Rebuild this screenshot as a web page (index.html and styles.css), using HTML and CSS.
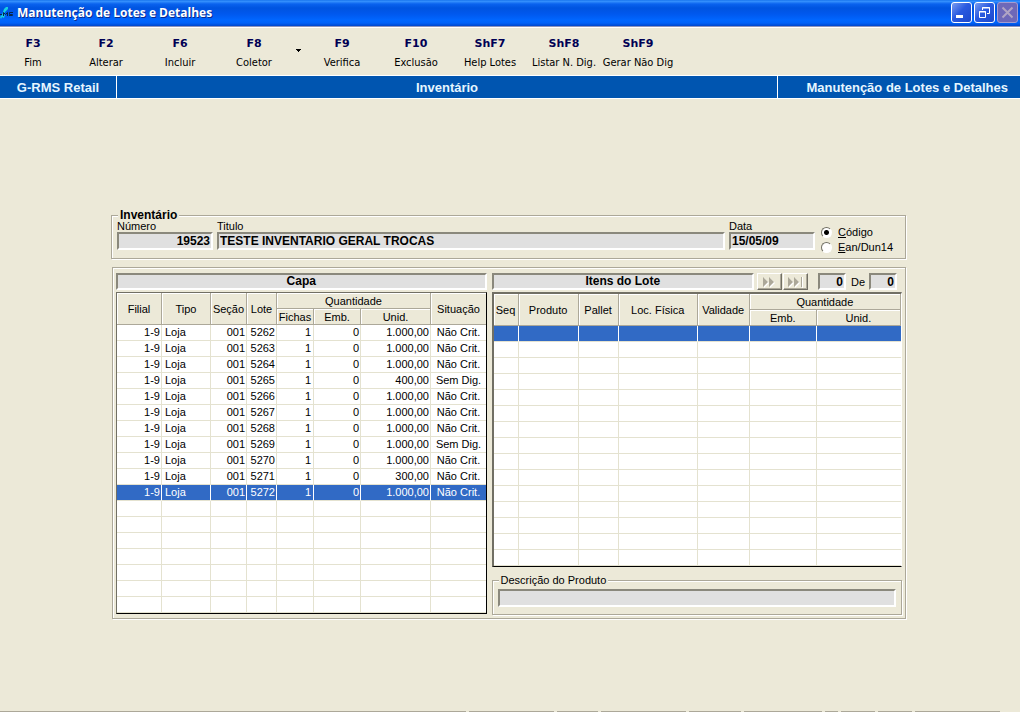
FILE: index.html
```html
<!DOCTYPE html>
<html lang="pt-BR">
<head>
<meta charset="utf-8">
<title>Manutenção de Lotes e Detalhes</title>
<link rel="stylesheet" href="styles.css">
</head>
<body>
<header class="titlebar">
  <svg class="logo" width="14" height="18" viewBox="0 0 14 18" aria-hidden="true">
    <path d="M3 8 L4 5 L6 3 L8 3 L8 5 L5 8 L4 10 L5 11 L4 14 L2 13 L1 15 L0 13 L2 11 Z" fill="#18d0e0"/>
    <path d="M0 10.500H2M3.500 12V8.500L5.500 10.500L7.500 8.500V12M13 8.500H9.500V10.500H12.500V11.500H9" fill="none" stroke="#06284c" stroke-width="1"/>
  </svg>
  <h1 class="title">Manutenção de Lotes e Detalhes</h1>
  <button class="win" aria-label="Minimizar"><svg width="19" height="19" viewBox="0 0 19 19"><path d="M4 12h7v3H4z" fill="#fff"/></svg></button>
  <button class="win" aria-label="Restaurar"><svg width="19" height="19" viewBox="0 0 19 19" fill="none" stroke="#fff"><path d="M7.5 7V4.5h7v6H12M7 5h8M4.5 8.5h6v6h-6zM4 9h7"/></svg></button>
  <button class="win win-off" aria-label="Fechar" disabled><svg width="19" height="19" viewBox="0 0 19 19"><path d="M4.500 4.500l10 10M14.500 4.500l-10 10" stroke="#b0a4c4" stroke-width="2"/></svg></button>
</header>

<nav class="toolbar">
  <button class="tool first"><b>F3</b><span>Fim</span></button>
  <button class="tool"><b>F2</b><span>Alterar</span></button>
  <button class="tool"><b>F6</b><span>Incluir</span></button>
  <button class="tool"><b>F8</b><span>Coletor</span></button>
  <button class="drop" aria-label="Opções do coletor"><svg width="5" height="3" viewBox="0 0 5 3"><path d="M0 0h5v1H4v1H3v1H2V2H1V1H0z"/></svg></button>
  <button class="tool"><b>F9</b><span>Verifica</span></button>
  <button class="tool"><b>F10</b><span>Exclusão</span></button>
  <button class="tool"><b>ShF7</b><span>Help Lotes</span></button>
  <button class="tool"><b>ShF8</b><span>Listar N. Dig.</span></button>
  <button class="tool"><b>ShF9</b><span>Gerar Não Dig</span></button>
</nav>

<div class="context">
  <div class="ctx ctx-app">G-RMS Retail</div>
  <div class="ctx ctx-module">Inventário</div>
  <div class="ctx ctx-screen">Manutenção de Lotes e Detalhes</div>
</div>

<main class="work">
  <fieldset class="group inventory">
    <legend class="bold">Inventário</legend>
    <div class="fields">
      <div class="field f-number"><label for="num">Número</label><input id="num" class="box right" value="19523" readonly></div>
      <div class="field f-title"><label for="tit">Titulo</label><input id="tit" class="box" value="TESTE INVENTARIO GERAL TROCAS" readonly></div>
      <div class="field f-date"><label for="dat">Data</label><input id="dat" class="box" value="15/05/09" readonly></div>
      <div class="radios">
        <label><input type="radio" name="modo" checked><span><u>C</u>ódigo</span></label>
        <label><input type="radio" name="modo"><span><u>E</u>an/Dun14</span></label>
      </div>
    </div>
  </fieldset>

  <section class="group panel">
    <div class="side">
      <h2 class="box caption">Capa</h2>
      <table class="grid" id="capa">
        <colgroup><col class="c-filial"><col class="c-tipo"><col class="c-secao"><col class="c-lote"><col class="c-fichas"><col class="c-emb"><col class="c-unid"><col class="c-sit"></colgroup>
        <thead>
          <tr><th rowspan="2">Filial</th><th rowspan="2">Tipo</th><th rowspan="2">Seção</th><th rowspan="2">Lote</th><th colspan="3">Quantidade</th><th rowspan="2">Situação</th></tr>
          <tr><th>Fichas</th><th>Emb.</th><th>Unid.</th></tr>
        </thead>
        <tbody></tbody>
      </table>
    </div>
    <div class="side">
      <div class="items-head">
        <h2 class="box caption">Itens do Lote</h2>
        <div class="nav-buttons">
          <button class="nav" aria-label="Próximo" disabled><svg width="16" height="12" viewBox="0 0 16 12"><path d="M3 2l5 5-5 5zM9 2l5 5-5 5z" fill="#fff"/><path d="M2 1l5 5-5 5zM8 1l5 5-5 5z" fill="#aca899"/></svg></button>
          <button class="nav" aria-label="Último" disabled><svg width="16" height="12" viewBox="0 0 16 12"><path d="M2 2l5 5-5 5zM8 2l5 5-5 5zM15 1h1v11h-1z" fill="#fff"/><path d="M1 1l5 5-5 5zM7 1l5 5-5 5zM14 1h1v10h-1z" fill="#aca899"/></svg></button>
        </div>
        <input class="box right count" aria-label="Item atual" value="0" readonly>
        <span class="of">De</span>
        <input class="box right count" aria-label="Total de itens" value="0" readonly>
      </div>
      <table class="grid items" id="itens">
        <colgroup><col class="c-seq"><col class="c-prod"><col class="c-pallet"><col class="c-loc"><col class="c-val"><col class="c-iemb"><col class="c-iunid"></colgroup>
        <thead>
          <tr><th rowspan="2">Seq</th><th rowspan="2">Produto</th><th rowspan="2">Pallet</th><th rowspan="2">Loc. Física</th><th rowspan="2">Validade</th><th colspan="2">Quantidade</th></tr>
          <tr><th>Emb.</th><th>Unid.</th></tr>
        </thead>
        <tbody></tbody>
      </table>
      <fieldset class="group product">
        <legend><label for="desc">Descrição do Produto</label></legend>
        <input id="desc" class="box" readonly>
      </fieldset>
    </div>
  </section>
</main>

<footer class="status"><i class="s1"></i><i class="s2"></i><i class="s3"></i><i class="s2"></i><i class="s4"></i><i class="s5"></i><i class="s6"></i><i class="s7"></i><i class="s7"></i><i class="s2"></i></footer>
<script src="app.js"></script>
</body>
</html>
```
FILE: styles.css
```css
* { box-sizing: border-box; }

body {
  margin: 0;
  min-height: 100vh;
  display: flex;
  flex-direction: column;
  background: #ece9d8;
  color: #000;
  font: 11px/12px "Liberation Sans", Arial, sans-serif;
}

button, input { font: inherit; color: inherit; margin: 0; }
button { border: 0; background: none; padding: 0; }
h1, h2 { margin: 0; font-size: inherit; }

.titlebar {
  display: flex;
  align-items: center;
  gap: 2px;
  height: 27px;
  padding: 0 2px 1px 0;
  border-bottom: 1px solid #8d94ba;
  background: linear-gradient(#0a66e6 0, #3a96ff 1px, #0a62ee 4px, #0054e0 8px, #0058ee 14px, #0066ff 20px, #0062f8 23px, #0046cc 26px);
}
.logo { flex: none; }
.title {
  flex: 1;
  padding: 1px 0 0 1px;
  color: #fff;
  font: bold 12px/16px "Open Sans", "Noto Sans", sans-serif;
  text-shadow: 1px 1px 0 #0a2a8c;
}
.win {
  width: 21px;
  height: 21px;
  border: 1px solid #fff;
  border-radius: 3px;
  background: linear-gradient(135deg, #7a9cf0, #2a5ae0 45%, #1c48cc);
}
.win svg { display: block; }
.win-off { border-color: #a49cd0; background: #6e68b8; }

.toolbar {
  display: flex;
  height: 48px;
  border-top: 1px solid #fff;
  font: 11px/14px "DejaVu Sans Condensed", "DejaVu Sans", sans-serif;
}
.tool {
  display: flex;
  flex-direction: column;
  align-items: center;
  gap: 5px;
  width: 74px;
  padding-top: 9px;
  white-space: nowrap;
}
.tool b { color: #000054; font-family: "DejaVu Sans", sans-serif; font-size: 11px; }
.first { width: 69px; padding-right: 3px; }
.drop { width: 14px; padding-bottom: 5px; }

.context {
  display: flex;
  height: 24px;
  border-top: 1px solid #fff;
  border-bottom: 1px solid #fff;
  background: #0055b0;
  color: #e6f6ff;
  font: bold 13px/24px "Liberation Sans", Arial, sans-serif;
}
.ctx-app { width: 117px; text-align: center; border-right: 1px solid #fff; }
.ctx-module { flex: 1; text-align: center; border-right: 1px solid #fff; }
.ctx-screen { width: 242px; padding-right: 12px; text-align: right; }

.work { flex: 1; padding: 110px 114px 0 111px; }

.group {
  min-width: 0;
  margin: 0;
  border: 1px solid #aca899;
  box-shadow: 1px 1px 0 #fff, inset 1px 1px 0 #fff;
}
.group > legend { padding: 0 2px; background: #ece9d8; }
.group > .bold { font-weight: bold; font-size: 12px; }

.inventory { padding: 0 8px 5px 5px; }
.inventory > legend { margin-left: 1px; }
.fields { display: flex; gap: 4px; }
.field { display: flex; flex-direction: column; }
.field label { line-height: 11px; }
.f-number { width: 96px; }
.f-title { flex: 1; }
.f-date { width: 86px; }
.radios { display: flex; flex-direction: column; gap: 3px; padding: 5px 0 0 2px; width: 78px; }
.radios label { display: flex; align-items: center; gap: 6px; }
.radios input {
  appearance: none;
  width: 11px;
  height: 11px;
  border: 1px solid;
  border-color: #716f64 #fff #fff #716f64;
  border-radius: 50%;
  background: #fff;
}
.radios input:checked { background: radial-gradient(circle, #000 2px, #fff 3px); }

.box {
  width: 100%;
  height: 18px;
  padding: 0 1px;
  border: 2px solid;
  border-color: #8a887c #fff #fff #8a887c;
  border-radius: 0;
  background: #e0e0e0;
  outline: 0;
  font-weight: bold;
  font-size: 12px;
  line-height: 13px;
}
.right { text-align: right; }
.caption { height: 17px; text-align: center; }

.panel {
  display: grid;
  grid-template-columns: 371fr 411fr;
  gap: 5px;
  margin: 8px 0 0 1px;
  padding: 5px 3px 3px 3px;
}
.side { display: flex; flex-direction: column; gap: 2px; min-width: 0; }
.items-head { display: flex; align-items: center; padding-right: 5px; }
.items-head .caption { flex: 1; }
.nav-buttons { display: flex; gap: 1px; padding: 0 10px 0 3px; }
.nav {
  display: flex;
  align-items: center;
  justify-content: center;
  width: 25px;
  height: 17px;
  border: 1px solid;
  border-color: #fff #716f64 #716f64 #fff;
  box-shadow: inset -1px -1px 0 #aca899;
}
.items-head .count { width: 28px; height: 17px; flex: none; }
.of { padding: 0 4px 0 5px; }

.grid {
  width: 100%;
  table-layout: fixed;
  border-spacing: 0;
  border: 1px solid;
  border-color: #716f64 #000 #000 #716f64;
  background: #fff;
}
.items { border-width: 2px 1px 1px 2px; border-right-color: #fff; }
.grid th {
  height: 16px;
  padding: 0;
  border-right: 1px solid #aca899;
  border-bottom: 1px solid #aca899;
  background: #ece9d8;
  box-shadow: inset 1px 1px 0 #fff;
  font-weight: normal;
  line-height: 14px;
  white-space: nowrap;
}
.grid td {
  height: 16px;
  padding: 0 1px;
  border-right: 1px solid #e4e2d0;
  border-bottom: 1px solid #e4e2d0;
  line-height: 15px;
  text-align: right;
  white-space: nowrap;
}
.grid .left { padding-left: 3px; text-align: left; }
.grid .mid { text-align: center; }
.grid .far { padding-right: 2px; }
.grid .sel td { background: #316ac5; color: #fff; border-right-color: #fff; }
.grid tr > :last-child:not([colspan]) { border-right-width: 0; }
.grid thead tr:last-child > :last-child { border-right-width: 1px; }

.c-filial { width: 45px; }
.c-tipo { width: 49px; }
.c-secao { width: 36px; }
.c-lote { width: 30px; }
.c-fichas { width: 37px; }
.c-emb { width: 47px; }
.c-unid { width: 70px; }
.c-sit { width: 55px; }
.c-seq { width: 25px; }
.c-prod { width: 60px; }
.c-pallet { width: 40px; }
.c-loc { width: 79px; }
.c-val { width: 52px; }
.c-iemb { width: 67px; }
.c-iunid { width: 84px; }

.product { margin-top: 5px; padding: 3px 5px 7px; }
.product > legend { margin-left: 1px; }
.product .box { display: block; }

.status { display: flex; gap: 3px; height: 1px; padding-right: 20px; }
.status i { background: #aca899; }
.s1 { flex: 1; }
.s2 { width: 85px; }
.s3 { width: 41px; }
.s4 { width: 52px; }
.s5 { width: 78px; }
.s6 { width: 13px; }
.s7 { width: 34px; }
```
FILE: app.js
```js
const lots = [
  ["5262", "1.000,00", "Não Crit."],
  ["5263", "1.000,00", "Não Crit."],
  ["5264", "1.000,00", "Não Crit."],
  ["5265", "400,00", "Sem Dig."],
  ["5266", "1.000,00", "Não Crit."],
  ["5267", "1.000,00", "Não Crit."],
  ["5268", "1.000,00", "Não Crit."],
  ["5269", "1.000,00", "Sem Dig."],
  ["5270", "1.000,00", "Não Crit."],
  ["5271", "300,00", "Não Crit."],
  ["5272", "1.000,00", "Não Crit."]
];

function addRow(body, cells, classes, selected) {
  const row = body.insertRow();
  if (selected) row.className = "sel";
  cells.forEach((text, i) => {
    const cell = row.insertCell();
    cell.textContent = text;
    if (classes[i]) cell.className = classes[i];
  });
}

const lotBody = document.querySelector("#capa tbody");
const lotClasses = ["", "left", "", "", "far", "", "", "mid"];
for (let i = 0; i < 18; i++) {
  const lot = lots[i];
  const cells = lot ? ["1-9", "Loja", "001", lot[0], "1", "0", lot[1], lot[2]] : Array(8).fill("");
  addRow(lotBody, cells, lotClasses, i === 10);
}

const itemBody = document.querySelector("#itens tbody");
for (let i = 0; i < 15; i++) {
  addRow(itemBody, Array(7).fill(""), [], i === 0);
}
```
